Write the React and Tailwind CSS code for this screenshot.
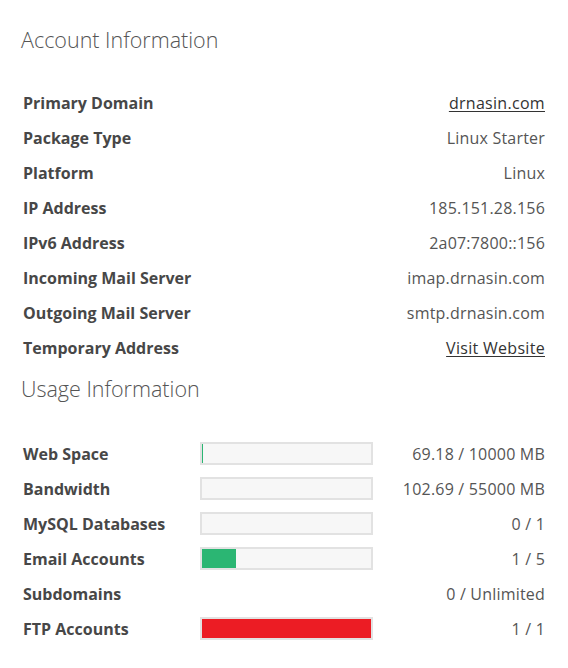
import React from "react";

const account = [
  ["Primary Domain", "drnasin.com", true],
  ["Package Type", "Linux Starter"],
  ["Platform", "Linux"],
  ["IP Address", "185.151.28.156"],
  ["IPv6 Address", "2a07:7800::156"],
  ["Incoming Mail Server", "imap.drnasin.com"],
  ["Outgoing Mail Server", "smtp.drnasin.com"],
  ["Temporary Address", "Visit Website", true],
];

const usage = [
  { label: "Web Space", value: "69.18 / 10000 MB", bar: "green", pct: 0.69 },
  { label: "Bandwidth", value: "102.69 / 55000 MB", bar: "green", pct: 0 },
  { label: "MySQL Databases", value: "0 / 1", bar: "green", pct: 0 },
  { label: "Email Accounts", value: "1 / 5", bar: "green", pct: 20 },
  { label: "Subdomains", value: "0 / Unlimited", bar: null },
  { label: "FTP Accounts", value: "1 / 1", bar: "red", pct: 100 },
];

export default function App() {
  return (
    <div
      className="w-[568px] h-[668px] bg-white pl-[21px] pr-[23px]"
      style={{ fontFamily: '"Open Sans", "Noto Sans", sans-serif' }}
    >
      <h2 className="mt-0 pt-[25px] h-[55px] text-[21.5px] leading-[30px] font-light text-[#555]">
        Account Information
      </h2>
      <div className="mt-[30px] pl-[2px]">
        {account.map(([l, v, link]) => (
          <div key={l} className="h-[35px] flex items-center justify-between">
            <span className="text-[16px] font-bold text-[#474747]">{l}</span>
            <span
              className={
                "text-[16px] " +
                (link
                  ? "text-[#333] underline underline-offset-2 tracking-[0.3px]"
                  : "text-[#555] tracking-[0.2px]")
              }
            >
              {v}
            </span>
          </div>
        ))}
      </div>
      <h2 className="mt-[9px] h-[30px] text-[21.5px] leading-[30px] font-light text-[#555]">
        Usage Information
      </h2>
      <div className="mt-[32px] pl-[2px]">
        {usage.map((u) => (
          <div key={u.label} className="h-[35px] flex items-center">
            <span className="w-[177px] text-[16px] font-bold text-[#474747]">{u.label}</span>
            <div className="w-[173px] h-[23px]">
              {u.bar && (
                <div className="w-full h-full border-2 border-[#e2e2e2] bg-[#f7f7f7]">
                  <div
                    className={u.bar === "red" ? "h-full bg-[#ec1c24]" : "h-full bg-[#2bb673]"}
                    style={{ width: u.pct + "%" }}
                  />
                </div>
              )}
            </div>
            <span className="flex-1 text-right text-[16px] text-[#555] tracking-[0.2px]">
              {u.value}
            </span>
          </div>
        ))}
      </div>
    </div>
  );
}
